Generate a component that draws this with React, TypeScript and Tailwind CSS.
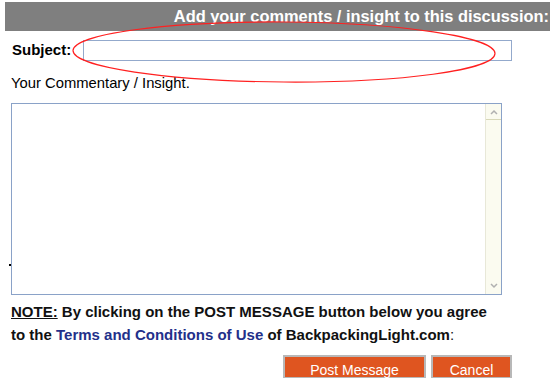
import React from "react";

export default function App() {
  return (
    <div
      className="relative w-[550px] h-[378px] overflow-hidden bg-white"
      style={{ fontFamily: '"Liberation Sans", Arial, sans-serif' }}
    >
      <div className="pt-[2px] pl-[5px]">
        <div className="h-[29px] bg-[#7f7f7f] flex items-center justify-end pr-[1px]">
          <span className="text-white font-bold text-[16.4px] leading-none">
            Add your comments / insight to this discussion:
          </span>
        </div>
      </div>
      <div className="flex items-center mt-[8px] pl-[12px]">
        <span className="font-bold text-[15px] text-black w-[71px]">Subject:</span>
        <div className="w-[429px] h-[21px] border border-[#93a9cc] bg-white" />
      </div>
      <div className="pl-[11px] mt-[14px] text-[14.8px] text-black leading-none">
        Your Commentary / Insight.
      </div>
      <div className="ml-[11px] mt-[13px] w-[491px] h-[192px] border border-[#8aa2c8] flex justify-end">
        <div className="w-[16px] h-full bg-[#fbfbf0] border-l border-[#e8e8d8] flex flex-col justify-between items-center">
          <div className="w-full h-[16px] border-b border-[#d8d8b8] flex items-center justify-center">
            <svg width="8" height="6" viewBox="0 0 8 6">
              <path d="M1 5 L4 2 L7 5" stroke="#b0b0b0" strokeWidth="1.5" fill="none" />
            </svg>
          </div>
          <div className="w-full h-[16px] flex items-center justify-center">
            <svg width="8" height="6" viewBox="0 0 8 6">
              <path d="M1 1 L4 4 L7 1" stroke="#b0b0b0" strokeWidth="1.5" fill="none" />
            </svg>
          </div>
        </div>
      </div>
      <div className="pl-[11px] mt-[5px] font-bold text-[15px] leading-[23px] text-[#111]">
        <div>
          <span className="underline">NOTE:</span> By clicking on the POST MESSAGE button below you agree
        </div>
        <div>
          to the <span className="text-[#23308a]">Terms and Conditions of Use</span> of BackpackingLight.com<span className="font-normal">:</span>
        </div>
      </div>
      <div className="flex justify-end gap-[5px] pr-[38px] mt-[9px]">
        <div className="w-[143px] h-[24px] bg-[#df5520] border-2 border-[#b8b8b8] flex items-start justify-center text-white text-[14px] pt-[6px] leading-none">
          Post Message
        </div>
        <div className="w-[81px] h-[24px] bg-[#df5520] border-2 border-[#b8b8b8] flex items-start justify-center text-white text-[14px] pt-[6px] leading-none">
          Cancel
        </div>
      </div>
      <div className="absolute left-[9px] top-[264px] w-[2px] h-[2px] bg-black" />
      <svg className="absolute left-0 top-0 pointer-events-none" width="550" height="378">
        <ellipse
          cx="284"
          cy="52"
          rx="211"
          ry="30"
          fill="none"
          stroke="#ff2020"
          strokeWidth="1.2"
          transform="rotate(0.4 284 52)"
        />
      </svg>
    </div>
  );
}
